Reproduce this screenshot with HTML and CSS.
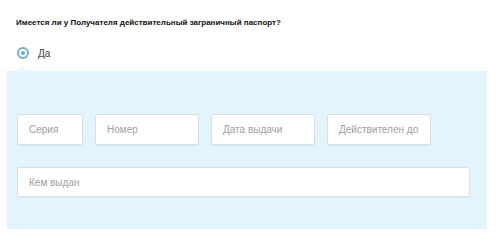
FILE: index.html
```html
<!doctype html>
<html lang="ru">
<head>
  <meta charset="UTF-8">
  <title>Загранпаспорт</title>
  <link rel="stylesheet" href="styles.css">
</head>
<body>

  <div class="question">
    <p class="questionTitle">Имеется ли у Получателя действительный заграничный паспорт?</p>

    <label class="radio">
      <span class="radioMark"></span>
      <span class="radioText">Да</span>
    </label>

    <div class="passportPanel">
      <div class="fieldRow">
        <div class="field fieldSeries">Серия</div>
        <div class="field fieldWide">Номер</div>
        <div class="field fieldWide">Дата выдачи</div>
        <div class="field fieldWide">Действителен до</div>
      </div>
      <div class="fieldRow">
        <div class="field fieldFull">Кем выдан</div>
      </div>
    </div>
  </div>

</body>
</html>
```

FILE: styles.css
```css
html, body {
  margin: 0;
  padding: 0;
  background: #fff;
}

.question {
  padding: 17px 13px 0 7px;
  font-family: "Liberation Sans", Arial, sans-serif;
}

.questionTitle {
  margin: 0 0 0 9px;
  font-size: 8px;
  font-weight: bold;
  color: #111;
  line-height: 11px;
}

.radio {
  display: flex;
  align-items: center;
  margin: 19px 0 0 10px;
  height: 12px;
}

.radioMark {
  width: 8px;
  height: 8px;
  border: 2px solid #72aed6;
  border-radius: 50%;
  position: relative;
  box-sizing: content-box;
}

/* inner dot of the checked radio */
.radioMark::after {
  content: "";
  position: absolute;
  left: 2px;
  top: 2px;
  width: 4px;
  height: 4px;
  border-radius: 50%;
  background: #6aa8d4;
}

.radioText {
  margin-left: 9px;
  font-size: 10px;
  color: #444;
}

.passportPanel {
  position: relative;
  margin-top: 12px;
  background: #e2f5fd;
  padding: 43px 17px 32px 10px;
  display: flex;
  flex-direction: column;
  gap: 22px;
}

/* little notch pointing at the radio */
.passportPanel::before {
  content: "";
  position: absolute;
  top: -5px;
  left: 10px;
  border-left: 5px solid transparent;
  border-right: 5px solid transparent;
  border-bottom: 5px solid #eef9fe;
}

.fieldRow {
  display: flex;
  gap: 12px;
}

.field {
  height: 31px;
  box-sizing: border-box;
  background: #fff;
  border: 1px solid #d8dfe4;
  border-radius: 2px;
  box-shadow: 0 1px 1px rgba(0, 0, 0, 0.04);
  padding-left: 11px;
  display: flex;
  align-items: center;
  font-size: 10px;
  color: #a0a0a0;
}

.fieldSeries {
  width: 66px;
}

.fieldWide {
  width: 104px;
}

.fieldFull {
  width: 453px;
  height: 30px;
}
```
